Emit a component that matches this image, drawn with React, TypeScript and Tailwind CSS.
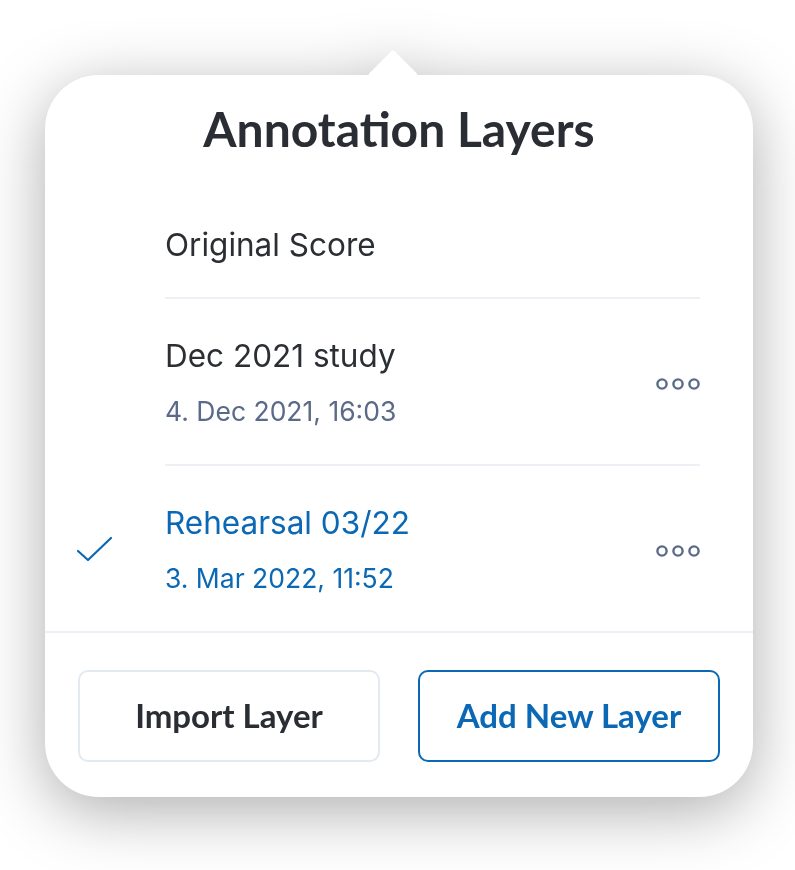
const layers = [
  { name: 'Dec 2021 study', date: '4. Dec 2021, 16:03', active: false },
  { name: 'Rehearsal 03/22', date: '3. Mar 2022, 11:52', active: true },
];

function MoreDots() {
  return (
    <svg width="44" height="16" viewBox="0 0 44 16" fill="none" stroke="#5b6a88" strokeWidth="2.4">
      <circle cx="6" cy="8" r="4.6" />
      <circle cx="22" cy="8" r="4.6" />
      <circle cx="38" cy="8" r="4.6" />
    </svg>
  );
}

function Check() {
  return (
    <svg width="38" height="28" viewBox="0 0 38 28" fill="none" stroke="#0a68b4" strokeWidth="2.2" strokeLinecap="round" strokeLinejoin="round">
      <path d="M2 15 L12 24 L35 2" />
    </svg>
  );
}

export default function App() {
  return (
    <div className="w-[795px] h-[870px] bg-white pt-[49px] pl-[45px] font-['Inter',sans-serif]">
      <div className="relative w-[708px] pt-[26px] drop-shadow-[0_14px_32px_rgba(0,0,0,0.32)]">
        <div className="absolute left-[330px] top-[8px] w-[36px] h-[36px] bg-white rotate-45 rounded-[3px]" />
        <div className="relative bg-white rounded-[54px] overflow-hidden">
          <div className="h-[117px] pt-[26px] text-center">
            <h1 className="text-[48px] leading-[56px] font-bold text-[#2a2d33] font-['Lato',sans-serif]">
              Annotation Layers
            </h1>
          </div>

          <div className="pl-[120px] pr-[53px]">
            <div className="h-[107px] flex items-center border-b-2 border-[#eef0f5]">
              <span className="text-[31.5px] leading-[38px] text-[#2b2e33]">Original Score</span>
            </div>
            {layers.map((layer) => (
              <div key={layer.name} className="relative h-[167px] flex items-center justify-between border-b-2 border-[#eef0f5]">
                {layer.active && (
                  <div className="absolute -left-[89px] top-[70px]">
                    <Check />
                  </div>
                )}
                <div className="flex flex-col gap-[22px]">
                  <span className={`text-[31.5px] leading-[36px] ${layer.active ? 'text-[#0a68b4]' : 'text-[#2b2e33]'}`}>
                    {layer.name}
                  </span>
                  <span className={`text-[26.5px] leading-[30px] ${layer.active ? 'text-[#0a68b4]' : 'text-[#5b6a88]'}`}>
                    {layer.date}
                  </span>
                </div>
                <div className="mt-[4px]">
                  <MoreDots />
                </div>
              </div>
            ))}
          </div>

          <div className="border-t-2 border-[#eef0f5] -mt-[2px] px-[33px] pt-[37px] pb-[35px] grid grid-cols-2 gap-[38px] font-['Lato',sans-serif]">
            <button className="h-[92px] rounded-[10px] border-2 border-[#e3e9f2] text-[33px] font-bold text-[#2a2d33]">
              Import Layer
            </button>
            <button className="h-[92px] rounded-[10px] border-2 border-[#0a68b4] text-[33px] font-bold text-[#0a68b4]">
              Add New Layer
            </button>
          </div>
        </div>
      </div>
    </div>
  );
}
